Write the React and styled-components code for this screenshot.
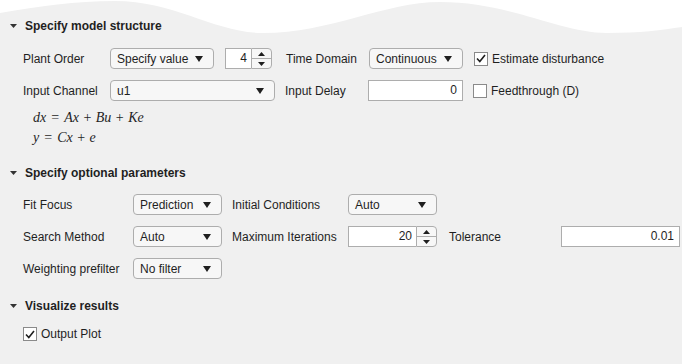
import React from 'react';
import styled, { createGlobalStyle } from 'styled-components';

const GlobalStyle = createGlobalStyle`
  body {
    margin: 0;
    background: #f0f0f0;
    font-family: "Liberation Sans", Arial, sans-serif;
    font-size: 12px;
    color: #1f1f1f;
  }
`;

const Page = styled.div`
  position: relative;
  width: 682px;
  height: 364px;
  overflow: hidden;
  background: #f0f0f0;
`;

const Wave = styled.svg`
  position: absolute;
  top: 0;
  left: 0;
`;

const Content = styled.div`
  position: relative;
  padding-top: 18px;
`;

const SectionHeader = styled.div`
  display: flex;
  align-items: center;
  height: 16px;
  padding-left: 10px;
  margin-top: ${(p) => p.$top || 0}px;
  font-weight: bold;
  gap: 8px;
`;

const Rows = styled.div`
  display: flex;
  flex-direction: column;
  gap: 11px;
  padding-left: 23px;
  margin-top: ${(p) => p.$top || 0}px;
`;

const Row = styled.div`
  display: flex;
  align-items: center;
  height: 21px;
`;

const Label = styled.span`
  width: ${(p) => p.$w}px;
  flex: none;
  white-space: nowrap;
`;

const Select = styled.div`
  box-sizing: border-box;
  width: ${(p) => p.$w}px;
  height: 21px;
  flex: none;
  display: flex;
  align-items: center;
  justify-content: space-between;
  padding: 0 10px 0 6px;
  border: 1px solid #adadad;
  border-radius: 4px;
  background: #f7f7f7;
  margin-right: ${(p) => p.$mr || 0}px;
`;

const Spinner = styled.div`
  width: ${(p) => p.$w}px;
  height: 21px;
  flex: none;
  display: flex;
  margin-right: ${(p) => p.$mr || 0}px;
`;

const SpinField = styled.div`
  box-sizing: border-box;
  flex: 1;
  height: 100%;
  border: 1px solid #adadad;
  border-right: none;
  background: #fff;
  text-align: right;
  padding-right: 4px;
  line-height: 19px;
`;

const SpinButtons = styled.div`
  box-sizing: border-box;
  width: 21px;
  height: 100%;
  display: flex;
  flex-direction: column;
  border: 1px solid #adadad;
  border-radius: 0 4px 4px 0;
  background: #f7f7f7;
`;

const SpinHalf = styled.div`
  flex: 1;
  display: flex;
  align-items: center;
  justify-content: center;
  border-top: ${(p) => (p.$divider ? '1px solid #adadad' : 'none')};
`;

const TextField = styled.div`
  box-sizing: border-box;
  width: ${(p) => p.$w}px;
  height: 21px;
  flex: none;
  border: 1px solid #adadad;
  background: #fff;
  text-align: right;
  padding-right: 5px;
  line-height: 19px;
  margin-right: ${(p) => p.$mr || 0}px;
`;

const Check = styled.label`
  display: flex;
  align-items: center;
  gap: 4px;
  white-space: nowrap;
`;

const Box = styled.span`
  box-sizing: border-box;
  width: 14px;
  height: 14px;
  border: 1px solid #8a8a8a;
  background: #fff;
  display: flex;
  align-items: center;
  justify-content: center;
`;

const Equations = styled.div`
  padding-left: 33px;
  margin-top: 7px;
  font-family: "Liberation Serif", "Times New Roman", serif;
  font-size: 14px;
  line-height: 20px;
`;

const Eq = styled.div`
  font-style: italic;
`;

const Op = styled.span`
  font-style: normal;
  margin: 0 ${(p) => p.$gap || 4.5}px;
`;

const ChecksRow = styled.div`
  display: flex;
  padding-left: 23px;
  margin-top: 13px;
`;

const Caret = () => (
  <svg width="7" height="4" viewBox="0 0 7 4">
    <path d="M0 0H7L3.5 4Z" fill="#333" />
  </svg>
);

const Arrow = () => (
  <svg width="8" height="6" viewBox="0 0 8 6">
    <path d="M0 0H8L4 6Z" fill="#1f1f1f" />
  </svg>
);

const Tri = ({ up }) => (
  <svg width="7" height="4" viewBox="0 0 7 4">
    <path d={up ? 'M0 4H7L3.5 0Z' : 'M0 0H7L3.5 4Z'} fill="#1f1f1f" />
  </svg>
);

const Dropdown = ({ w, mr, children }) => (
  <Select $w={w} $mr={mr}>
    <span>{children}</span>
    <Arrow />
  </Select>
);

const NumberSpinner = ({ w, mr, value }) => (
  <Spinner $w={w} $mr={mr}>
    <SpinField>{value}</SpinField>
    <SpinButtons>
      <SpinHalf>
        <Tri up />
      </SpinHalf>
      <SpinHalf $divider>
        <Tri />
      </SpinHalf>
    </SpinButtons>
  </Spinner>
);

const CheckBox = ({ checked, children }) => (
  <Check>
    <Box>
      {checked && (
        <svg width="10" height="9" viewBox="0 0 10 9">
          <path d="M1 4.5L3.8 7.5L9 1" fill="none" stroke="#1f1f1f" strokeWidth="1.6" />
        </svg>
      )}
    </Box>
    {children}
  </Check>
);

const App = () => {
  return (
    <Page>
      <GlobalStyle />
      <Wave width="682" height="40" viewBox="0 0 682 40">
        <path
          d="M0 0V13C40 6 75 1 115 1C175 1 215 33 263 33C330 33 385 2 440 2C510 2 560 33 607 33C640 33 662 30 682 27V0Z"
          fill="#fff"
        />
      </Wave>
      <Content>
        <SectionHeader>
          <Caret />
          Specify model structure
        </SectionHeader>
        <Rows $top={14}>
          <Row>
            <Label $w={87}>Plant Order</Label>
            <Dropdown w={104} mr={11}>Specify value</Dropdown>
            <NumberSpinner w={47} mr={14} value="4" />
            <Label $w={83}>Time Domain</Label>
            <Dropdown w={94} mr={11}>Continuous</Dropdown>
            <CheckBox checked>Estimate disturbance</CheckBox>
          </Row>
          <Row>
            <Label $w={87}>Input Channel</Label>
            <Dropdown w={165} mr={10}>u1</Dropdown>
            <Label $w={83}>Input Delay</Label>
            <TextField $w={95} $mr={10}>0</TextField>
            <CheckBox>Feedthrough (D)</CheckBox>
          </Row>
        </Rows>
        <Equations>
          <Eq>
            dx<Op $gap={5}>=</Op>Ax<Op>+</Op>Bu<Op>+</Op>Ke
          </Eq>
          <Eq>
            y<Op $gap={5}>=</Op>Cx<Op>+</Op>e
          </Eq>
        </Equations>
        <SectionHeader $top={17}>
          <Caret />
          Specify optional parameters
        </SectionHeader>
        <Rows $top={13}>
          <Row>
            <Label $w={110}>Fit Focus</Label>
            <Dropdown w={89} mr={10}>Prediction</Dropdown>
            <Label $w={116}>Initial Conditions</Label>
            <Dropdown w={89}>Auto</Dropdown>
          </Row>
          <Row>
            <Label $w={110}>Search Method</Label>
            <Dropdown w={89} mr={10}>Auto</Dropdown>
            <Label $w={116}>Maximum Iterations</Label>
            <NumberSpinner w={89} mr={12} value="20" />
            <Label $w={112}>Tolerance</Label>
            <TextField $w={119}>0.01</TextField>
          </Row>
          <Row>
            <Label $w={110}>Weighting prefilter</Label>
            <Dropdown w={89}>No filter</Dropdown>
          </Row>
        </Rows>
        <SectionHeader $top={19}>
          <Caret />
          Visualize results
        </SectionHeader>
        <ChecksRow>
          <CheckBox checked>Output Plot</CheckBox>
        </ChecksRow>
      </Content>
    </Page>
  );
};

export default App;
